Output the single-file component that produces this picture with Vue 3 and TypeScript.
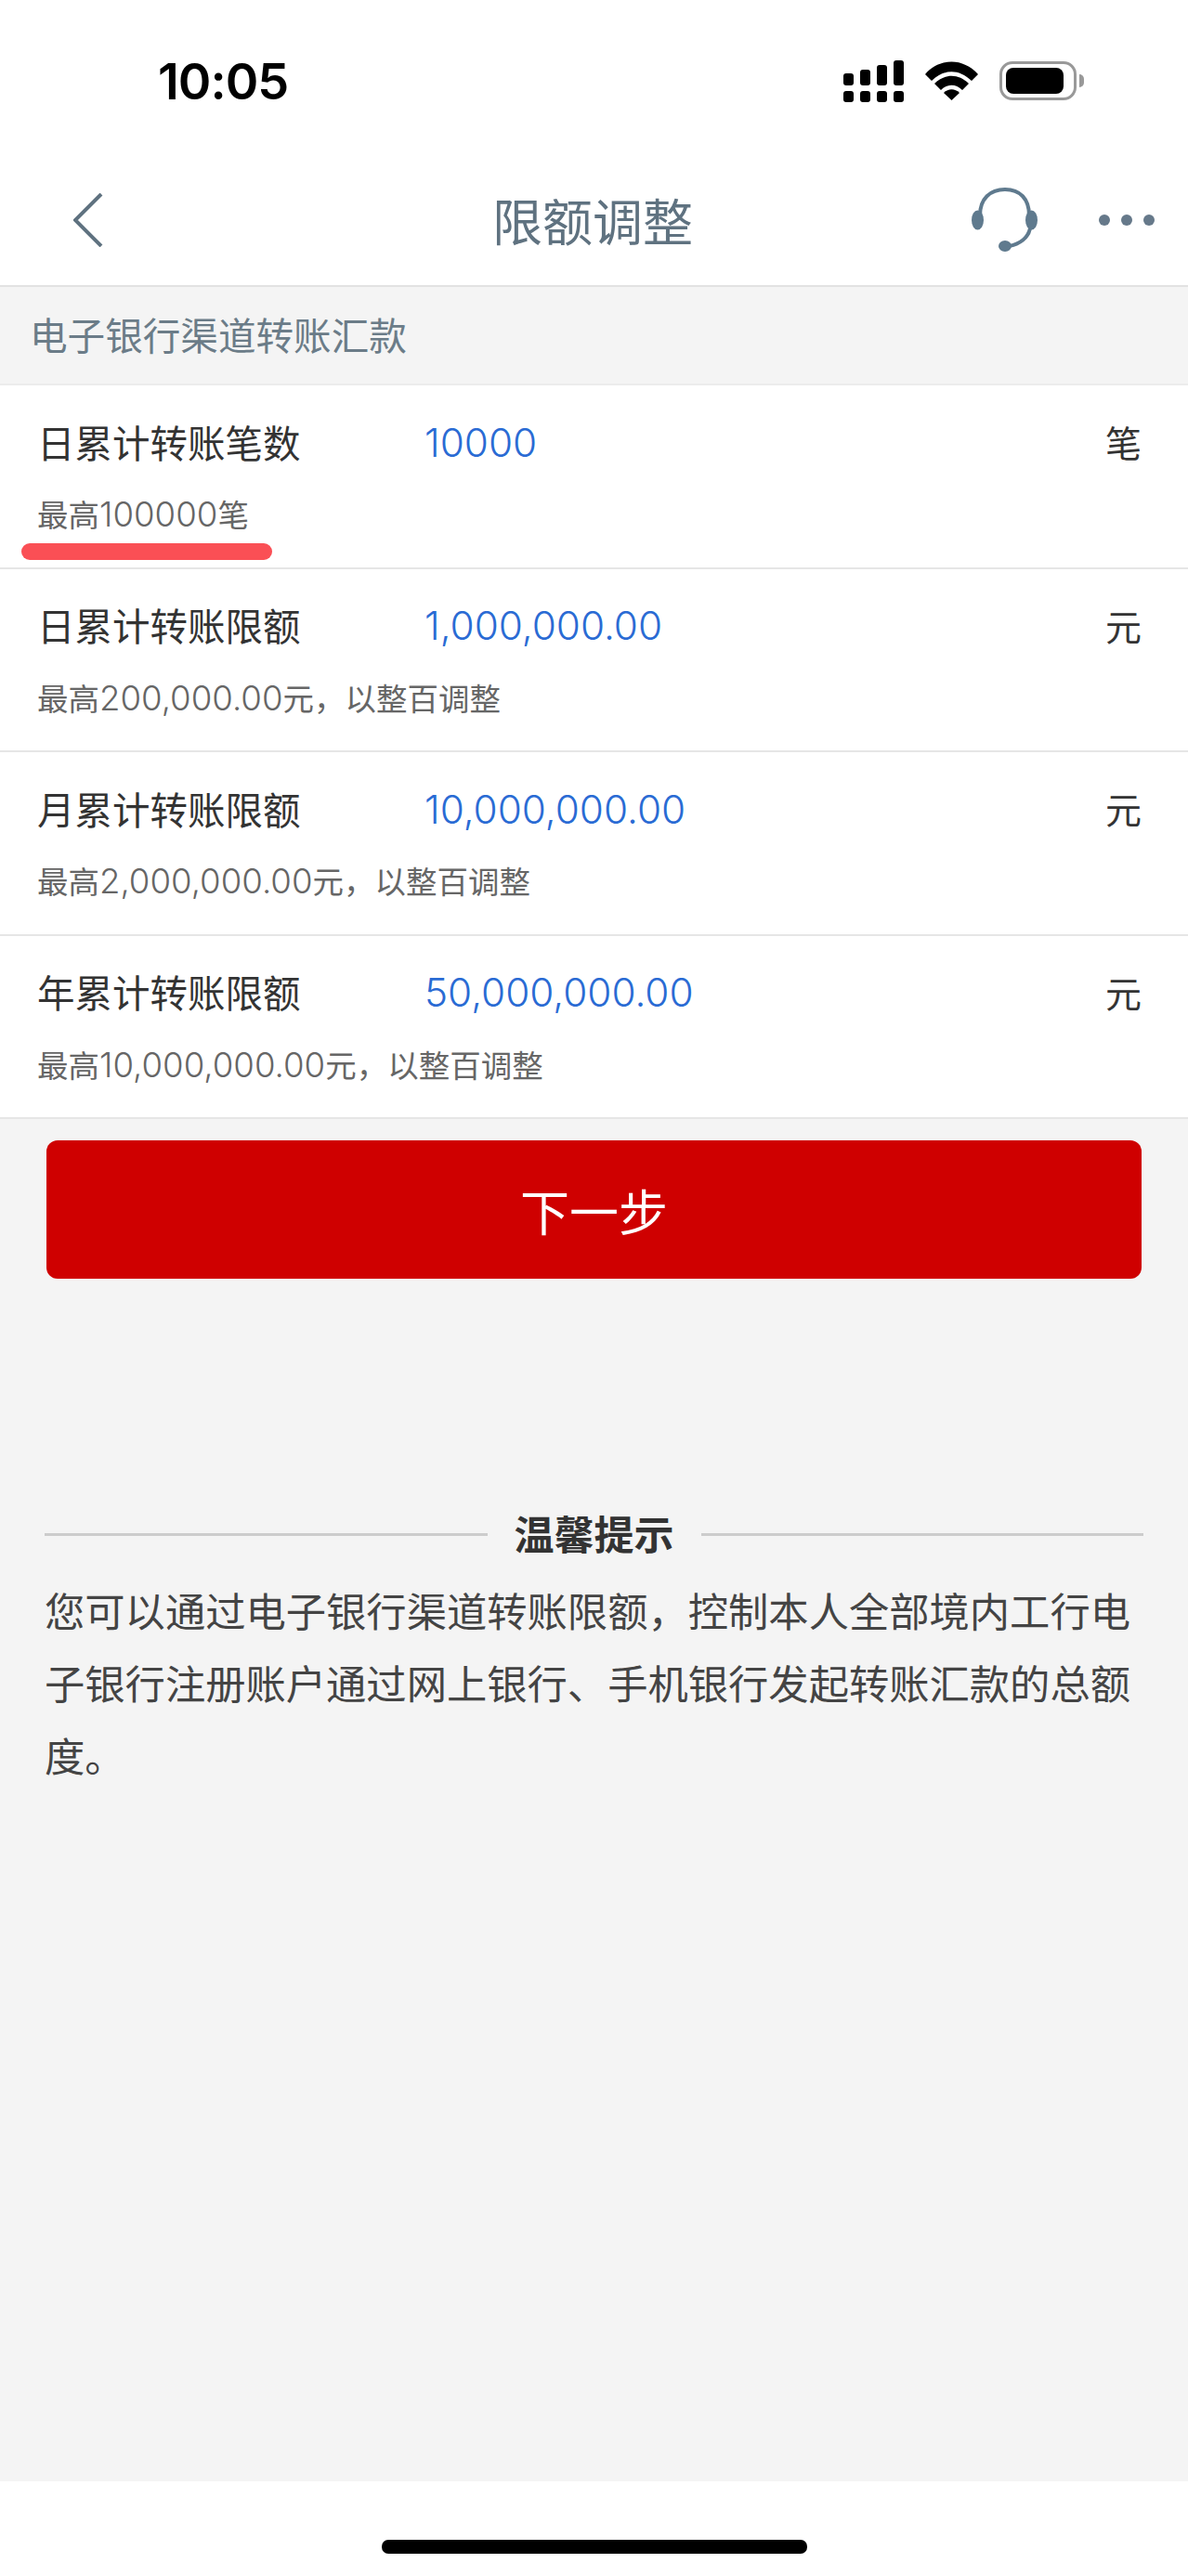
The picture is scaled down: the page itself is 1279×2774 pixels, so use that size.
<script setup lang="ts">
interface LimitRow {
	title: string;
	value: string;
	unit: string;
	amount: string;
	suffix: string;
	marked?: boolean;
}

const rows: LimitRow[] = [
	{ title: '日累计转账笔数', value: '10000', unit: '笔', amount: '100000', suffix: '笔', marked: true },
	{ title: '日累计转账限额', value: '1,000,000.00', unit: '元', amount: '200,000.00', suffix: '元，以整百调整' },
	{ title: '月累计转账限额', value: '10,000,000.00', unit: '元', amount: '2,000,000.00', suffix: '元，以整百调整' },
	{ title: '年累计转账限额', value: '50,000,000.00', unit: '元', amount: '10,000,000.00', suffix: '元，以整百调整' },
];

const signalBars = [
	{ x: 0, y: 14, h: 13 },
	{ x: 18, y: 10, h: 17 },
	{ x: 36, y: 5, h: 22 },
	{ x: 54, y: 0, h: 27 },
];
</script>

<template>
	<div class="page">
		<header class="top">
			<div class="status">
				<span class="time">10:05</span>
				<div class="status-icons">
					<svg class="signal" width="65" height="45" viewBox="0 0 65 45">
						<g v-for="bar in signalBars" :key="bar.x">
							<rect :x="bar.x" :y="bar.y" width="11" :height="bar.h" rx="3" />
							<rect :x="bar.x" y="33" width="11" height="12" rx="3" />
						</g>
					</svg>
					<svg class="wifi" width="57" height="42" viewBox="0 0 57 42">
						<path d="M0 14C16-4 41-4 57 14L50 21C36 8 21 8 7 21Z" />
						<path d="M10 24C21 13 36 13 47 24L40 31C33 24 24 24 17 31Z" />
						<path d="M20 34C25 29 32 29 37 34L28.5 42Z" />
					</svg>
					<div class="battery">
						<div class="battery-fill"></div>
					</div>
					<div class="battery-nub"></div>
				</div>
			</div>
			<nav class="nav">
				<svg class="back" width="32" height="58" viewBox="0 0 32 58">
					<polyline points="30,1 2,29 30,57" />
				</svg>
				<h1 class="nav-title">限额调整</h1>
				<div class="nav-actions">
					<svg class="headset" width="71" height="70" viewBox="0 0 71 70">
						<path class="band" d="M9 30C9 12 20 2 36 2C52 2 62 12 62 30" />
						<path class="band" d="M63 44C61 54 52 61 40 63" />
						<ellipse cx="6.5" cy="35" rx="6.5" ry="10.5" />
						<ellipse cx="64.5" cy="35" rx="6.5" ry="10.5" />
						<ellipse cx="36" cy="63" rx="7" ry="6" />
					</svg>
					<div class="dots"><i></i><i></i><i></i></div>
				</div>
			</nav>
		</header>

		<div class="section-label">电子银行渠道转账汇款</div>

		<section class="list">
			<div v-for="row in rows" :key="row.title" class="row">
				<div class="row-main">
					<span class="row-title">{{ row.title }}</span>
					<span class="row-value">{{ row.value }}</span>
					<span class="row-unit">{{ row.unit }}</span>
				</div>
				<div class="row-hint">最高<span class="hint-num">{{ row.amount }}</span>{{ row.suffix }}</div>
				<div v-if="row.marked" class="marker"></div>
			</div>
		</section>

		<button class="next" type="button">下一步</button>

		<div class="tips-head">
			<span class="tips-line"></span>
			<strong class="tips-title">温馨提示</strong>
			<span class="tips-line"></span>
		</div>
		<p class="tips-text">您可以通过电子银行渠道转账限额，控制本人全部境内工行电子银行注册账户通过网上银行、手机银行发起转账汇款的总额度。</p>

		<footer class="home">
			<div class="home-bar"></div>
		</footer>
	</div>
</template>

<style>
body {
	margin: 0;
}
</style>

<style scoped>
.page {
	display: flex;
	flex-direction: column;
	width: 1279px;
	height: 2774px;
	background: #f4f4f4;
	font-family: 'Noto Sans CJK SC', 'Noto Sans', sans-serif;
	overflow: hidden;
}

.top {
	height: 307px;
	background: #fff;
	border-bottom: 2px solid #e2e2e2;
	flex: none;
}

.status {
	display: flex;
	align-items: center;
	justify-content: space-between;
	height: 174px;
	padding: 0 112px 0 170px;
}

.time {
	font-family: Inter, sans-serif;
	font-size: 54px;
	font-weight: 600;
	letter-spacing: -1px;
	color: #000;
}

.status-icons {
	display: flex;
	align-items: center;
}

.signal,
.wifi {
	fill: #000;
}

.wifi {
	margin-left: 23px;
}

.battery {
	box-sizing: border-box;
	width: 83px;
	height: 42px;
	margin-left: 23px;
	padding: 4px;
	border: 3px solid #999;
	border-radius: 14px;
}

.battery-fill {
	width: 62px;
	height: 28px;
	background: #000;
	border-radius: 8px;
}

.battery-nub {
	width: 5px;
	height: 14px;
	margin-left: 3px;
	background: #999;
	border-radius: 0 5px 5px 0;
}

.nav {
	display: grid;
	grid-template-columns: 1fr auto 1fr;
	align-items: center;
	box-sizing: border-box;
	height: 133px;
	padding: 0 36px 8px 79px;
}

.back {
	fill: none;
	stroke: #5f7280;
	stroke-width: 4;
}

.nav-title {
	margin: 0;
	font-size: 54px;
	font-weight: 400;
	color: #5f7280;
	transform: translateX(-23px);
}

.nav-actions {
	display: flex;
	align-items: center;
	justify-content: flex-end;
	gap: 66px;
}

.headset {
	fill: #5f7a8e;
}

.headset .band {
	fill: none;
	stroke: #5f7a8e;
	stroke-width: 4;
}

.dots {
	display: flex;
	gap: 12px;
}

.dots i {
	width: 12px;
	height: 12px;
	border-radius: 50%;
	background: #66798a;
}

.section-label {
	flex: none;
	box-sizing: border-box;
	height: 104px;
	padding: 0 32px;
	font-size: 40.6px;
	line-height: 102px;
	color: #6b7c88;
}

.list {
	flex: none;
	background: #fff;
	border-top: 2px solid #ececec;
}

.row {
	position: relative;
	box-sizing: border-box;
	height: 197.5px;
	padding: 29px 50px 0 40px;
	border-bottom: 2px solid #e6e6e6;
}

.row-main {
	display: flex;
	align-items: center;
	height: 62px;
}

.row-title {
	width: 417px;
	font-size: 40.5px;
	color: #333;
}

.row-value {
	flex: 1;
	padding-top: 2px;
	font-family: Inter, sans-serif;
	font-size: 42.3px;
	font-weight: 300;
	color: #2a6bd4;
}

.row-unit {
	font-size: 39px;
	color: #333;
}

.row-hint {
	margin-top: 25px;
	font-size: 33.5px;
	line-height: 44px;
	color: #666;
}

.hint-num {
	font-family: Inter, sans-serif;
	font-size: 36.6px;
	font-weight: 300;
}

.marker {
	position: absolute;
	left: 23px;
	top: 170px;
	width: 270px;
	height: 18px;
	background: #fa4f55;
	border-radius: 9px;
}

.next {
	flex: none;
	width: 1179px;
	height: 149px;
	margin: 23px 0 0 50px;
	border: none;
	border-radius: 12px;
	background: #cf0000;
	color: #fff;
	font-family: inherit;
	font-size: 53px;
}

.tips-head {
	display: flex;
	flex: none;
	align-items: center;
	height: 60px;
	margin: 245px 48px 0;
}

.tips-line {
	flex: 1;
	height: 3px;
	background: #ccc;
}

.tips-title {
	padding: 0 29px 5px;
	font-size: 43px;
	font-weight: 700;
	color: #333;
}

.tips-text {
	flex: none;
	width: 1183px;
	margin: 12px 0 0 48px;
	font-size: 43.3px;
	line-height: 78px;
	color: #444;
}

.home {
	display: flex;
	justify-content: center;
	box-sizing: border-box;
	height: 102px;
	margin-top: auto;
	padding-top: 63px;
	background: #fff;
}

.home-bar {
	width: 458px;
	height: 15px;
	background: #000;
	border-radius: 7px;
}
</style>
